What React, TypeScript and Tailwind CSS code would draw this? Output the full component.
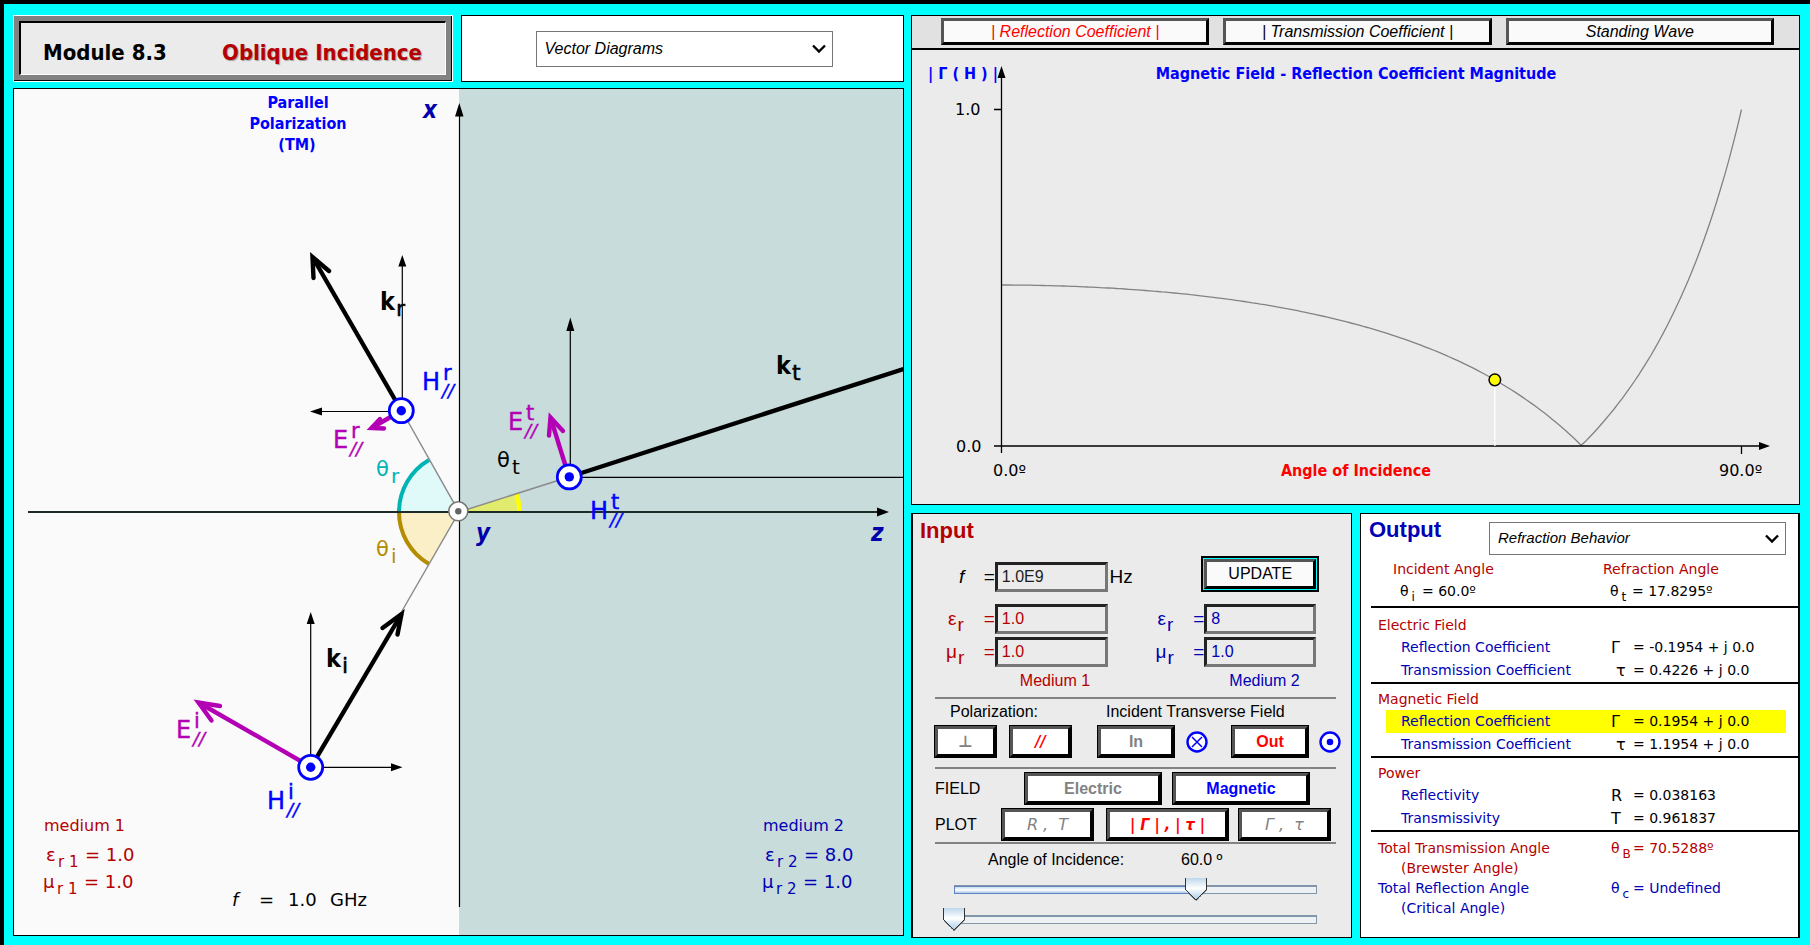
import { useState, type ReactNode } from "react";

const MAGENTA = "#b400b4";
const BLUE = "#0000ff";
const N2 = Math.sqrt(8);

/* ---------- shared controls ---------- */

function Dropdown({ label, options, className }: { label: string; options: string[]; className: string }) {
  return (
    <div className={`relative ${className}`}>
      <select
        aria-label={label}
        className="h-full w-full appearance-none border border-[#767676] bg-white pl-2 font-['Liberation_Sans',sans-serif] text-black italic"
      >
        {options.map((o) => (
          <option key={o}>{o}</option>
        ))}
      </select>
      <svg viewBox="0 0 14 10" className="pointer-events-none absolute top-1/2 right-[7px] h-[10px] w-[14px] -translate-y-1/2">
        <path d="M1 1.5 L7 7.5 L13 1.5" fill="none" stroke="#000" strokeWidth="2.4" />
      </svg>
    </div>
  );
}

function BevelButton({ className, pressed, children }: { className: string; pressed?: boolean; children: ReactNode }) {
  return (
    <button
      type="button"
      aria-pressed={pressed}
      className={`h-[31px] border-[3px] border-t-[#555] border-r-black border-b-black border-l-[#555] bg-white text-[16px] leading-[22px] shadow-[0_0_0_1px_#000] ${className}`}
    >
      {children}
    </button>
  );
}

function TabButton({ active, children }: { active?: boolean; children: ReactNode }) {
  return (
    <button
      type="button"
      className={`h-[27px] flex-1 border-[3px] border-t-[#555] border-r-black border-b-black border-l-[#555] bg-[#fafafa] text-[16px] leading-[20px] italic ${active ? "text-[#ff0000]" : "text-black"}`}
    >
      {children}
    </button>
  );
}

function ValueInput({ id, value, label, className }: { id: string; value: string; label: string; className: string }) {
  return (
    <input
      id={id}
      aria-label={label}
      defaultValue={value}
      className={`h-[30px] w-full min-w-0 border-[3px] border-t-[#222] border-r-[#777] border-b-[#777] border-l-[#222] bg-[#ebebeb] px-[4px] text-[16px] ${className}`}
    />
  );
}

function Slider({ label, value, max, onChange }: { label: string; value: number; max: number; onChange: (v: number) => void }) {
  return (
    <div className="grid h-[23px] items-center">
      <div className="mx-[11px] h-[9px] border border-t-2 border-[#8296aa] bg-[#eef1f4] [grid-area:1/1]">
        {value > 0 && (
          <div
            className="-mt-px -ml-px h-[8px] border border-[#6482be] bg-linear-to-b from-[#c8dcf0] via-white to-[#aac8e6]"
            style={{ width: `${(value / max) * 100}%` }}
          />
        )}
      </div>
      <input
        type="range"
        aria-label={label}
        min={0}
        max={max}
        step={0.1}
        value={value}
        onChange={(e) => onChange(Number(e.target.value))}
        className="h-[23px] w-full appearance-none bg-transparent [grid-area:1/1] [&::-webkit-slider-thumb]:h-[23px] [&::-webkit-slider-thumb]:w-[22px] [&::-webkit-slider-thumb]:appearance-none [&::-webkit-slider-thumb]:bg-[linear-gradient(45deg,transparent_50%,#333_50%,#333_59%,transparent_59%),linear-gradient(-45deg,transparent_50%,#333_50%,#333_59%,transparent_59%),linear-gradient(#333,#333),linear-gradient(#333,#333),linear-gradient(#bed7eb,#ffffff_45%,#d2e4f2_70%,#a5c8e1)] [&::-webkit-slider-thumb]:bg-[size:11px_11px,11px_11px,1px_12px,1px_12px,22px_23px] [&::-webkit-slider-thumb]:bg-[position:0_12px,11px_12px,0_0,21px_0,0_0] [&::-webkit-slider-thumb]:bg-no-repeat [&::-webkit-slider-thumb]:[clip-path:polygon(0_0,100%_0,100%_12px,50%_100%,0_12px)]"
      />
    </div>
  );
}

/* ---------- vector diagram ---------- */

function Arrow({ from, to, a, b, color }: { from: string; to: string; a: string; b: string; color: string }) {
  return (
    <g fill="none" stroke={color} strokeWidth="4.4">
      <path d={`M${from} L${to}`} />
      <path d={`M${a} L${to} L${b}`} strokeLinecap="round" strokeLinejoin="miter" />
    </g>
  );
}

function Dot({ x, y }: { x: number; y: number }) {
  return (
    <g>
      <circle cx={x} cy={y} r="12" fill="#fff" stroke={BLUE} strokeWidth="2.8" />
      <circle cx={x} cy={y} r="4.7" fill={BLUE} />
    </g>
  );
}

function FieldLabel({ x, y, sym, sup, color }: { x: number; y: number; sym: string; sup: string; color: string }) {
  const dx = sym === "H" ? 19 : 16;
  return (
    <g fill={color} stroke={color} strokeWidth="0.4">
      <text x={x - 2} y={y} fontSize="24">{sym}</text>
      <text x={x + dx} y={y - 10} fontSize="21">{sup}</text>
      <text x={x + dx - 1} y={y + 7} fontSize="18" fontStyle="italic">//</text>
    </g>
  );
}

function KLabel({ x, y, sub }: { x: number; y: number; sub: string }) {
  return (
    <g fill="#000">
      <text x={x - 2} y={y} fontSize="25" className="font-['DejaVu_Sans_Condensed','DejaVu_Sans',sans-serif] font-bold">k</text>
      <text x={x + 14} y={y + 6} fontSize="22" stroke="#000" strokeWidth="0.5">{sub}</text>
    </g>
  );
}

function Theta({ x, y, sub, color }: { x: number; y: number; sub: string; color: string }) {
  return (
    <g fill={color}>
      <text x={x - 1} y={y} fontSize="21">θ</text>
      <text x={x + 14} y={y + 7} fontSize="20">{sub}</text>
    </g>
  );
}

function MediumInfo({ x, n, eps, mu, color }: { x: number; n: number; eps: string; mu: string; color: string }) {
  return (
    <g fill={color}>
      <text x={x} y="831" fontSize="16">medium {n}</text>
      <text x={x + 2} y="861" fontSize="18">ε</text>
      <text x={x + 14} y="867" fontSize="15">r {n}</text>
      <text x={x + 41} y="861" fontSize="18">= {eps}</text>
      <text x={x - 1} y="888" fontSize="18">μ</text>
      <text x={x + 13} y="894" fontSize="15">r {n}</text>
      <text x={x + 40} y="888" fontSize="18">= {mu}</text>
    </g>
  );
}

function VectorDiagram() {
  return (
    <svg
      viewBox="14 89 889 846"
      role="img"
      aria-label="Vector diagram"
      className="block h-auto w-full font-['DejaVu_Sans',sans-serif]"
    >
      <rect x="14" y="89" width="889" height="846" fill="#fafafa" />
      <rect x="459" y="89" width="444" height="846" fill="#c8dcdb" />

      <path d="M459 512 L399 512 A60 60 0 0 1 429 460 Z" fill="#e0fafa" />
      <path d="M459 512 L399 512 A60 60 0 0 0 429 564 Z" fill="#fbefc8" />
      <path d="M459 512 L519 512 A60 60 0 0 0 516 493.500 Z" fill="#e1eb6e" />
      <path d="M399 512 A60 60 0 0 1 429 460" fill="none" stroke="#00b4b4" strokeWidth="4" />
      <path d="M399 512 A60 60 0 0 0 429 564" fill="none" stroke="#b48c00" strokeWidth="4" />
      <path d="M519.500 512 A60 60 0 0 0 516.500 493.500" fill="none" stroke="#ffff00" strokeWidth="4.500" />

      <path d="M402 411 L459 512 L402 611 M459 512 L569 477" fill="none" stroke="#8c8c8c" strokeWidth="1.500" />
      <path d="M28 512 H880" stroke="#1e2a26" strokeWidth="2" />
      <path d="M889 512 L877 507.500 V516.500 Z" />
      <path d="M459.500 114 V907" stroke="#000" strokeWidth="1.200" />
      <path d="M459.300 103 L455 116.500 H463.500 Z" />
      <circle cx="458.300" cy="511.300" r="9.500" fill="#fff" stroke="#787878" strokeWidth="1.600" />
      <circle cx="458.300" cy="511.300" r="3.200" fill="#646464" />

      <g stroke="#000" strokeWidth="1.200">
        <path d="M402.300 264 V410 M320 411.500 H402 M570.300 328 V477 M570 477.400 H903 M310.700 622 V767 M310 767.300 H392" />
      </g>
      <path d="M402.300 255 L398.300 266.500 H406.300 Z M310 411.500 L322 407.500 V415.500 Z M570.300 317.500 L566.300 331 H574.300 Z M310.700 612 L306.700 624 H314.700 Z M402.500 767.300 L391 763.300 V771.300 Z" />

      <Arrow from="401,410" to="312.500,257" a="329,271" b="313.500,278" color="#000" />
      <Arrow from="311,767" to="401.500,614" a="382.500,628" b="397.500,634.500" color="#000" />
      <path d="M569 477 L903.500 369" stroke="#000" strokeWidth="4.4" />
      <Arrow from="401,411" to="371.500,428" a="380,419" b="384,428.500" color={MAGENTA} />
      <Arrow from="311,767" to="198.500,702.500" a="220,706" b="211.500,720.500" color={MAGENTA} />
      <Arrow from="569,477" to="550.500,417.500" a="549,435.500" b="563,431" color={MAGENTA} />

      <Dot x={401.3} y={410.7} />
      <Dot x={310.700} y={767.300} />
      <Dot x={569.300} y={476.900} />

      <KLabel x={382} y={310} sub="r" />
      <KLabel x={328} y={667} sub="i" />
      <KLabel x={778} y={374} sub="t" />
      <FieldLabel x={424} y={390} sym="H" sup="r" color={BLUE} />
      <FieldLabel x={269} y={809} sym="H" sup="i" color={BLUE} />
      <FieldLabel x={592} y={519} sym="H" sup="t" color={BLUE} />
      <FieldLabel x={335} y={448} sym="E" sup="r" color={MAGENTA} />
      <FieldLabel x={178} y={738} sym="E" sup="i" color={MAGENTA} />
      <FieldLabel x={510} y={430} sym="E" sup="t" color={MAGENTA} />
      <Theta x={377} y={476} sub="r" color="#00b4b4" />
      <Theta x={377} y={556} sub="i" color="#b48c00" />
      <Theta x={498} y={467} sub="t" color="#000" />

      <g fill="#0000aa" fontSize="24" fontStyle="italic" className="font-['DejaVu_Sans_Condensed','DejaVu_Sans',sans-serif] font-bold">
        <text x="423" y="118">x</text>
        <text x="476" y="541">y</text>
        <text x="871" y="541">z</text>
      </g>
      <g fill={BLUE} fontSize="16" textAnchor="middle" className="font-['DejaVu_Sans_Condensed','DejaVu_Sans',sans-serif] font-bold">
        <text x="298" y="108">Parallel</text>
        <text x="298" y="129">Polarization</text>
        <text x="297" y="150">(TM)</text>
      </g>

      <MediumInfo x={44} n={1} eps="1.0" mu="1.0" color="#b40000" />
      <MediumInfo x={763} n={2} eps="8.0" mu="1.0" color="#0000b4" />
      <g fontSize="18" fill="#000">
        <text x="232" y="906" fontStyle="italic">f</text>
        <text x="259" y="906">=</text>
        <text x="288" y="906">1.0</text>
        <text x="330" y="906">GHz</text>
      </g>
    </svg>
  );
}

/* ---------- reflection chart ---------- */

function reflection(deg: number) {
  const t = (deg * Math.PI) / 180;
  const ci = Math.cos(t);
  const ct = Math.sqrt(1 - (Math.sin(t) / N2) ** 2);
  return Math.abs((ct / N2 - ci) / (ct / N2 + ci));
}

function ReflectionChart({ angle }: { angle: number }) {
  const px = (d: number) => 1001.5 + (740 * d) / 90;
  const py = (v: number) => 445.5 - 336 * v;
  const pts: string[] = [];
  for (let d = 0; d <= 90; d += 0.5) pts.push(`${px(d).toFixed(1)},${py(reflection(d)).toFixed(1)}`);
  return (
    <svg
      viewBox="912 50 887 454"
      role="img"
      aria-label="Reflection coefficient chart"
      className="block h-auto w-full bg-[#ebebeb] font-['DejaVu_Sans',sans-serif]"
    >
      <g className="font-['DejaVu_Sans_Condensed','DejaVu_Sans',sans-serif] font-bold" fontSize="16">
        <text x="928" y="79" fill={BLUE}>| Γ ( H ) |</text>
        <text x="1356" y="79" fill={BLUE} textAnchor="middle">Magnetic Field - Reflection Coefficient Magnitude</text>
        <text x="1356" y="476" fill="#ff0000" textAnchor="middle">Angle of Incidence</text>
      </g>
      <g fontSize="16" fill="#000">
        <text x="955" y="115">1.0</text>
        <text x="956" y="452">0.0</text>
        <text x="993" y="476">0.0º</text>
        <text x="1719" y="476">90.0º</text>
      </g>
      <polyline points={pts.join(" ")} fill="none" stroke="#828282" strokeWidth="1.300" />
      <path d="M1001.500 76 V453 M994 109.500 H1001 M1741.500 446 V454" stroke="#000" strokeWidth="1.300" />
      <path d="M994 446 H1762" stroke="#000" strokeWidth="1.600" />
      <path d="M1001.500 66 L997.500 78 H1005.500 Z M1770 446 L1759 442 V450 Z" />
      <path d={`M${px(angle)} ${py(reflection(angle))} V446`} stroke="#fff" strokeWidth="1.300" />
      <circle cx={px(angle)} cy={py(reflection(angle))} r="5.800" fill="#ffff00" stroke="#000" strokeWidth="1.500" />
    </svg>
  );
}

/* ---------- input panel ---------- */

function SymbolLabel({ htmlFor, sym, className }: { htmlFor: string; sym: ReactNode; className: string }) {
  return (
    <label htmlFor={htmlFor} className={`flex h-[30px] items-center justify-between text-[19px] leading-[30px] ${className}`}>
      <span>{sym}</span>
      <span>=</span>
    </label>
  );
}

function Sub({ children }: { children: ReactNode }) {
  return <span className="relative top-[6px] pl-px">{children}</span>;
}

function InputPanel({ angle, setAngle }: { angle: number; setAngle: (v: number) => void }) {
  const [phase, setPhase] = useState(0);
  return (
    <section className="border border-l-2 border-black bg-[#ebebeb] pb-[6px] text-[16px]">
      <h2 className="px-[7px] pt-px text-[22px] leading-[32px] font-bold text-[#b40000]">Input</h2>
      <form className="mt-[9px] grid grid-cols-[82fr_113fr_97fr_112fr_35fr] items-end" onSubmit={(e) => e.preventDefault()}>
        <SymbolLabel htmlFor="freq" sym={<i>f</i>} className="pl-[46px] text-black" />
        <ValueInput id="freq" label="Frequency" value="1.0E9" className="text-[#1e1e1e]" />
        <span className="h-[30px] pl-[2px] text-[19px] leading-[30px] text-black">Hz</span>
        <div className="-mx-[3px] border-2 border-black bg-[#00ffff] p-[1px]">
          <button
            type="submit"
            className="h-[30px] w-full border-[3px] border-t-[#555] border-r-black border-b-black border-l-[#555] bg-[#fafafa] text-[16px] leading-[22px] text-black"
          >
            UPDATE
          </button>
        </div>
        <span />

        <SymbolLabel htmlFor="eps1" sym={<>ε<Sub>r</Sub></>} className="mt-[12px] pl-[35px] text-[#b40000]" />
        <ValueInput id="eps1" label="Relative permittivity, medium 1" value="1.0" className="text-[#b40000]" />
        <SymbolLabel htmlFor="eps2" sym={<>ε<Sub>r</Sub></>} className="mt-[12px] pl-[50px] text-[#0000b4]" />
        <ValueInput id="eps2" label="Relative permittivity, medium 2" value="8" className="text-[#0000b4]" />
        <span />

        <SymbolLabel htmlFor="mu1" sym={<>μ<Sub>r</Sub></>} className="mt-[3px] pl-[33px] text-[#b40000]" />
        <ValueInput id="mu1" label="Relative permeability, medium 1" value="1.0" className="text-[#b40000]" />
        <SymbolLabel htmlFor="mu2" sym={<>μ<Sub>r</Sub></>} className="mt-[3px] pl-[48px] text-[#0000b4]" />
        <ValueInput id="mu2" label="Relative permeability, medium 2" value="1.0" className="text-[#0000b4]" />
        <span />

        <span />
        <span className="pt-[3px] pl-[25px] leading-[22px] text-[#b40000]">Medium 1</span>
        <span />
        <span className="pt-[3px] pl-[25px] leading-[22px] text-[#0000b4]">Medium 2</span>
      </form>

      <div className="mr-[15px] ml-[22px]">
        <div className="mt-[5px] flex border-t-2 border-[#828282] pt-[2px]">
          <div>
            <div className="pl-[15px] leading-[22px]">Polarization:</div>
            <div className="mt-[3px] flex gap-[14px]">
              <BevelButton className="w-[61px] text-[#828282]">
                <span className="font-['DejaVu_Sans',sans-serif] font-bold">⊥</span>
              </BevelButton>
              <BevelButton className="w-[61px] font-bold text-[#ff0000] italic" pressed>
                <span className="font-['DejaVu_Sans_Condensed','DejaVu_Sans',sans-serif]">//</span>
              </BevelButton>
            </div>
          </div>
          <div className="ml-[27px] flex-1">
            <div className="pl-[8px] leading-[22px]">Incident Transverse Field</div>
            <div className="mt-[3px] -mr-[5px] flex items-center gap-[12px]">
              <BevelButton className="w-[76px] font-bold text-[#828282]">In</BevelButton>
              <svg viewBox="0 0 22 22" className="size-[22px] shrink-0">
                <circle cx="11" cy="11" r="9.500" fill="#fff" stroke={BLUE} strokeWidth="2.400" />
                <path d="M6 6 L16 16 M16 6 L6 16" stroke={BLUE} strokeWidth="1.500" />
              </svg>
              <BevelButton className="ml-[12px] w-[76px] font-bold text-[#ff0000]" pressed>Out</BevelButton>
              <svg viewBox="0 0 22 22" className="-ml-[1px] size-[22px] shrink-0">
                <circle cx="11" cy="11" r="9.500" fill="#fff" stroke={BLUE} strokeWidth="2.400" />
                <circle cx="11" cy="11" r="3.300" fill={BLUE} />
              </svg>
            </div>
          </div>
        </div>

        <div className="mt-[10px] border-t-2 border-[#828282] pt-[4px]">
          <div className="flex items-center">
            <span className="w-[90px]">FIELD</span>
            <BevelButton className="w-[136px] font-bold text-[#828282]">Electric</BevelButton>
            <BevelButton className="ml-[12px] w-[136px] font-bold text-[#0000ff]" pressed>Magnetic</BevelButton>
          </div>
          <div className="mt-[5px] flex items-center font-['DejaVu_Sans',sans-serif]">
            <span className="w-[67px] font-['Liberation_Sans',sans-serif]">PLOT</span>
            <BevelButton className="w-[91px] whitespace-pre text-[#828282] italic">{"R ,  T"}</BevelButton>
            <BevelButton className="ml-[14px] w-[121px] font-['DejaVu_Sans_Condensed','DejaVu_Sans',sans-serif] font-bold text-[#ff0000] italic" pressed>
              | Γ | , | τ |
            </BevelButton>
            <BevelButton className="ml-[11px] w-[91px] whitespace-pre text-[#828282] italic">{"Γ ,  τ"}</BevelButton>
          </div>
        </div>

        <div className="mt-[2px] border-t-2 border-[#828282] pt-[5px]">
          <div className="flex leading-[22px]">
            <span className="w-[193px] pl-[53px] whitespace-nowrap">Angle of Incidence:</span>
            <output className="ml-[53px] whitespace-nowrap">{angle.toFixed(1)} º</output>
          </div>
          <div className="mt-[7px] mr-[8px] ml-[8px] flex flex-col gap-[7px]">
            <Slider label="Angle of incidence" value={angle} max={90} onChange={setAngle} />
            <Slider label="Phase" value={phase} max={90} onChange={setPhase} />
          </div>
        </div>
      </div>
    </section>
  );
}

/* ---------- output panel ---------- */

type Row = { label: string; sym: string; value: string; wide?: boolean; mark?: boolean };

function ResultGroup({ title, rows, className }: { title: string; rows: Row[]; className: string }) {
  return (
    <div className={`ml-[10px] border-t-2 border-black ${className}`}>
      <h3 className="pl-[7px] leading-[22px] text-[#b40000]">{title}</h3>
      <div className="mr-[12px] ml-[15px]">
        <table className="w-full table-fixed leading-[23px]">
          <tbody>
            {rows.map((r) => (
              <tr key={r.label} className={r.mark ? "bg-[#ffff00]" : ""}>
                <th className="w-[225px] pl-[15px] text-left font-normal whitespace-nowrap text-[#0000b4]">{r.label}</th>
                <td className={`w-[22px] text-[16px] ${r.wide ? "" : "pl-[5px]"}`}>{r.sym}</td>
                <td className="whitespace-nowrap">= {r.value}</td>
              </tr>
            ))}
          </tbody>
        </table>
      </div>
    </div>
  );
}

function ThetaSub({ sub }: { sub: string }) {
  return (
    <>
      θ<span className="relative top-[5px] pl-[3px] text-[12px]">{sub}</span>
    </>
  );
}

function OutputPanel() {
  return (
    <section className="border border-r-2 border-black bg-white font-['DejaVu_Sans',sans-serif] text-[14px]">
      <div className="flex justify-between pr-[12px] pl-[8px] font-['Liberation_Sans',sans-serif]">
        <h2 className="pt-px text-[22px] leading-[30px] font-bold text-[#0000b4]">Output</h2>
        <Dropdown label="Output type" className="mt-[8px] h-[33px] w-[297px] text-[15px]" options={["Refraction Behavior"]} />
      </div>
      <dl className="mt-[3px] mb-[3px] ml-[32px] grid grid-cols-[210px_1fr] leading-[22px]">
        <div>
          <dt className="text-[#b40000]">Incident Angle</dt>
          <dd className="flex pl-[7px]">
            <span className="w-[22px]"><ThetaSub sub="i" /></span>= 60.0º
          </dd>
        </div>
        <div>
          <dt className="text-[#b40000]">Refraction Angle</dt>
          <dd className="flex pl-[7px]">
            <span className="w-[22px]"><ThetaSub sub="t" /></span>= 17.8295º
          </dd>
        </div>
      </dl>
      <ResultGroup
        title="Electric Field"
        className="pt-[6px]"
        rows={[
          { label: "Reflection Coefficient", sym: "Γ", value: "-0.1954 + j 0.0", wide: true },
          { label: "Transmission Coefficient", sym: "τ", value: "0.4226 + j 0.0" },
        ]}
      />
      <ResultGroup
        title="Magnetic Field"
        className="pt-[4px]"
        rows={[
          { label: "Reflection Coefficient", sym: "Γ", value: "0.1954 + j 0.0", wide: true, mark: true },
          { label: "Transmission Coefficient", sym: "τ", value: "1.1954 + j 0.0" },
        ]}
      />
      <ResultGroup
        title="Power"
        className="pt-[4px]"
        rows={[
          { label: "Reflectivity", sym: "R", value: "0.038163", wide: true },
          { label: "Transmissivity", sym: "T", value: "0.961837", wide: true },
        ]}
      />
      <div className="ml-[10px] border-t-2 border-black pt-[6px] leading-[20px]">
        <table className="ml-[7px] table-fixed">
          <tbody>
            <tr className="align-top text-[#b40000]">
              <th className="w-[233px] text-left font-normal">
                Total Transmission Angle
                <div className="pl-[23px]">(Brewster Angle)</div>
              </th>
              <td className="w-[22px] whitespace-nowrap"><ThetaSub sub="B" /></td>
              <td>= 70.5288º</td>
            </tr>
            <tr className="align-top text-[#0000b4]">
              <th className="w-[233px] text-left font-normal">
                Total Reflection Angle
                <div className="pl-[23px]">(Critical Angle)</div>
              </th>
              <td className="w-[22px] whitespace-nowrap"><ThetaSub sub="c" /></td>
              <td>= Undefined</td>
            </tr>
          </tbody>
        </table>
      </div>
    </section>
  );
}

/* ---------- page ---------- */

export default function App() {
  const [angle, setAngle] = useState(60);
  return (
    <main className="grid min-h-screen grid-cols-[891fr_889fr] content-start gap-[7px] border-t-4 border-l-4 border-black bg-[#00ffff] pt-[11px] pr-[10px] pb-[8px] pl-[9px] font-['Liberation_Sans',sans-serif] text-black">
      <div className="flex flex-col gap-[6px]">
        <div className="grid grid-cols-[440fr_443fr] gap-[8px]">
          <header className="border border-white">
            <div className="h-full border-r border-b border-black bg-[#828282] p-[5px]">
              <div className="flex h-[54px] items-center justify-between border-t-2 border-r border-b border-l-2 border-t-black border-r-white border-b-white border-l-black bg-[#ebebeb] pt-[8px] pr-[23px] pl-[22px] font-['DejaVu_Sans_Condensed','DejaVu_Sans',sans-serif] text-[22px] font-bold">
                <span>Module 8.3</span>
                <h1 className="text-[#b40000] [text-shadow:1px_1px_1px_#a0a0a0]">Oblique Incidence</h1>
              </div>
            </div>
          </header>
          <div className="flex items-center justify-center border border-black bg-white pl-[3px]">
            <Dropdown label="Diagram type" className="h-[36px] w-[297px] text-[16px]" options={["Vector Diagrams"]} />
          </div>
        </div>
        <section className="border border-black">
          <VectorDiagram />
        </section>
      </div>

      <div className="flex flex-col gap-[8px]">
        <section className="border border-black">
          <nav className="flex h-[34px] gap-[14px] border-b-2 border-black bg-[#e1e1e1] pt-[2px] pr-[25px] pl-[29px]">
            <TabButton active>| Reflection Coefficient |</TabButton>
            <TabButton>| Transmission Coefficient |</TabButton>
            <TabButton>Standing Wave</TabButton>
          </nav>
          <ReflectionChart angle={angle} />
        </section>
        <div className="grid flex-1 grid-cols-[441fr_440fr] gap-[8px]">
          <InputPanel angle={angle} setAngle={setAngle} />
          <OutputPanel />
        </div>
      </div>
    </main>
  );
}
